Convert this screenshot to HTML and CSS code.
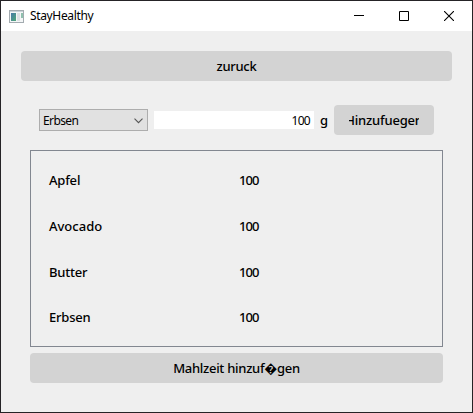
FILE: index.html
```html
<!DOCTYPE html>
<html lang="de">
<head>
<meta charset="utf-8">
<title>StayHealthy</title>
<link rel="stylesheet" href="styles.css">
</head>
<body>
<div class="window">
  <header class="titlebar">
    <svg class="app-icon" width="15" height="13" viewBox="0 0 15 13">
      <defs><linearGradient id="pane" x1="0" y1="0" x2="1" y2="1"><stop offset="0" stop-color="#4779a8"/><stop offset="1" stop-color="#4fa878"/></linearGradient></defs>
      <rect x=".5" y=".5" width="14" height="12" fill="#f4f6f7" stroke="#a3abb0"/>
      <path d="M1 1.5h13" stroke="#c9d2d8"/>
      <rect x="2" y="3" width="5" height="8" fill="url(#pane)"/>
      <rect x="8" y="3" width="3" height="8" fill="#dde1e4"/>
      <rect x="12" y="3" width="2" height="5" fill="#8fc0ae"/>
    </svg>
    <span class="title">StayHealthy</span>
    <div class="controls">
      <svg width="10" height="10" viewBox="0 0 10 10"><path d="M0 4.5h10" stroke="#000"/></svg>
      <svg width="10" height="10" viewBox="0 0 10 10"><path d="M.5.5h9v9h-9z" fill="none" stroke="#000"/></svg>
      <svg width="10" height="10" viewBox="0 0 10 10"><path d="M0 0l10 10M10 0L0 10" stroke="#000" stroke-width="1.1"/></svg>
    </div>
  </header>
  <main class="content">
    <button class="btn back">zuruck</button>
    <section class="panel">
      <div class="form">
        <div class="combo"><span>Erbsen</span><svg width="9" height="6" viewBox="0 0 9 6"><path d="M.5.7l4 4 4-4" fill="none" stroke="#555" stroke-width="1.1"/></svg></div>
        <div class="amount">100</div>
        <span class="unit">g</span>
        <button class="btn add"><span class="clip"><span class="add-label">Hinzufuegen</span></span></button>
      </div>
      <div class="list">
        <div class="row"><span class="name">Apfel</span><span class="value">100</span></div>
        <div class="row"><span class="name wide">Avocado</span><span class="value">100</span></div>
        <div class="row"><span class="name">Butter</span><span class="value">100</span></div>
        <div class="row"><span class="name">Erbsen</span><span class="value">100</span></div>
      </div>
      <button class="btn meal">Mahlzeit hinzuf&#xFFFD;gen</button>
    </section>
  </main>
</div>
</body>
</html>
```
FILE: styles.css
```css
* { box-sizing: border-box; }
body {
  margin: 0;
  font: 500 13px/18px "Noto Sans", "DejaVu Sans", sans-serif;
  color: #000;
}
svg { display: block; flex: none; }
.window {
  width: 473px;
  height: 413px;
  border: 1px solid #252326;
  background: #efefef;
}
.titlebar {
  display: flex;
  align-items: center;
  height: 30px;
  padding: 0 18px 0 8px;
  background: #fff;
}
.title {
  margin-left: 6px;
  font-size: 12px;
  font-weight: 400;
  letter-spacing: -0.35px;
}
.controls { display: flex; gap: 35px; margin-left: auto; }
.content { padding: 20px 20px 0; }
.btn {
  display: flex;
  align-items: center;
  justify-content: center;
  height: 30px;
  padding: 0;
  border: 0;
  border-radius: 4px;
  background: #d3d3d3;
  color: inherit;
  font: inherit;
}
.back { width: 431px; letter-spacing: -0.3px; }
.panel { width: 413px; margin: 24px 0 0 9px; }
.form { display: flex; align-items: center; padding-left: 9px; }
.combo {
  display: flex;
  align-items: center;
  justify-content: space-between;
  width: 109px;
  height: 22px;
  padding: 2px 4px 0 3px;
  border: 1px solid #adadad;
  background: #e1e1e1;
  font-size: 12px;
  font-weight: 400;
  letter-spacing: -0.6px;
}
.amount {
  width: 160px;
  height: 18px;
  margin-left: 6px;
  padding: 1px 4px 0 0;
  background: #fff;
  font-size: 12px;
  font-weight: 400;
  letter-spacing: -0.7px;
  text-align: right;
}
.unit { width: 8px; margin: 0 6px; }
.add { width: 100px; }
.clip { display: flex; justify-content: center; width: 70px; overflow: hidden; }
.add-label { flex: none; letter-spacing: -0.2px; }
.list {
  display: flex;
  flex-direction: column;
  gap: 27.66px;
  height: 197px;
  margin: 15px 0 6px;
  padding: 20.4px 18px 0;
  border: 1px solid #828790;
}
.row { display: grid; grid-template-columns: 190px 1fr; }
.name { letter-spacing: -0.2px; }
.wide { letter-spacing: 0; }
.value { letter-spacing: -0.9px; }
.meal { width: 413px; letter-spacing: -0.28px; }
```
